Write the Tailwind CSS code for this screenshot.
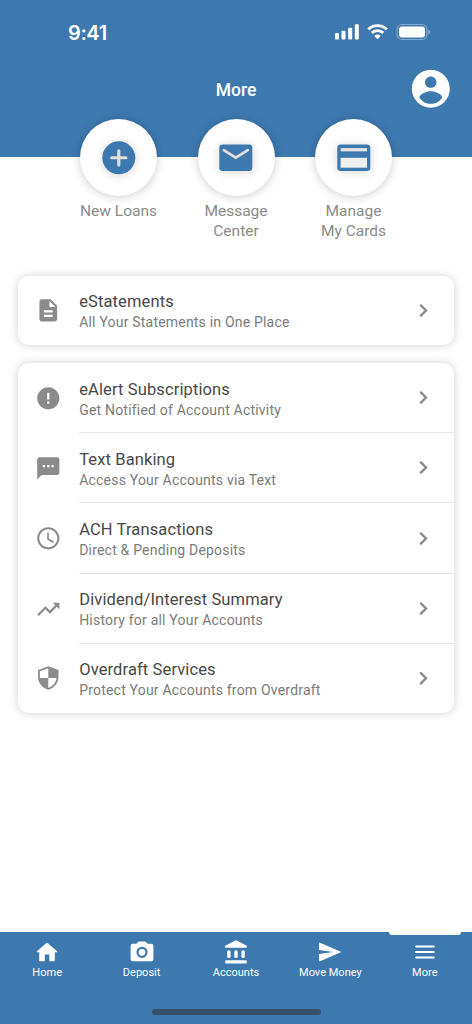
<!DOCTYPE html>
<html lang="en">
<head>
<meta charset="utf-8">
<title>More</title>
<script src="https://cdn.jsdelivr.net/npm/@tailwindcss/browser@4"></script>
</head>
<body class="bg-white font-['Roboto',sans-serif]">
<div class="w-[472px] h-[1024px] flex flex-col overflow-hidden bg-white">
  <header class="h-[157px] shrink-0 bg-[#3d78af] text-white flex flex-col">
    <div class="h-[64px] flex items-center justify-between pl-[68px] pr-[41px]">
      <span class="font-['Inter',sans-serif] font-semibold text-[20px] leading-6 tracking-[-0.4px] pt-px">9:41</span>
      <svg class="w-[96px] h-[18px]" viewBox="0 0 96 18" fill="#fff">
        <rect x="0" y="10" width="4" height="6.5" rx="1"/><rect x="6.5" y="7.7" width="4" height="8.8" rx="1"/><rect x="13.2" y="4.7" width="4" height="11.8" rx="1"/><rect x="19.8" y="1.2" width="4" height="15.3" rx="1"/>
        <g fill="none" stroke="#fff" stroke-width="2.9"><path d="M33.3 6.4a13.2 13.2 0 0 1 18.4 0"/><path d="M36.8 9.9a8.2 8.2 0 0 1 11.4 0"/></g>
        <path d="M42.5 16.3l-3.2-3.3a4.7 4.7 0 0 1 6.4 0z"/>
        <rect x="62.1" y="1.6" width="29.8" height="14.8" rx="4.6" fill="none" stroke="#fff" stroke-opacity=".42"/>
        <rect x="64" y="3.5" width="26" height="11" rx="3"/><path d="M93.5 6.5v5a2.8 2.8 0 0 0 0-5z" fill-opacity=".5"/>
      </svg>
    </div>
    <div class="h-[50.4px] grid grid-cols-3 items-center px-[18px]">
      <h1 class="col-start-2 text-center font-medium text-[17.5px] leading-6 tracking-[0px] pt-[1.4px]">More</h1>
      <svg class="justify-self-end w-[45.6px] h-[45.6px]" viewBox="0 0 24 24" fill="#fff"><path d="M12 2C6.48 2 2 6.48 2 12s4.480 10 10 10 10-4.480 10-10S17.520 2 12 2zm0 3.500c1.660 0 3 1.340 3 3s-1.340 3-3 3-3-1.340-3-3 1.340-3 3-3zm0 14.400c-2.500 0-4.710-1.280-6-3.220.03-1.990 4-3.380 6-3.380s5.970 1.390 6 3.380c-1.290 1.940-3.500 3.220-6 3.220z"/></svg>
    </div>
  </header>

  <nav class="-mt-[38px] h-[156.7px] shrink-0 grid grid-cols-[repeat(3,117.5px)] justify-center text-[#8b8b8b] text-[15.5px] leading-[20px] tracking-[0px] text-center">
    <div class="flex flex-col items-center gap-[5px]">
      <div class="size-[77px] rounded-full bg-white shadow-[0_1px_10px_rgba(0,0,0,0.2)] flex items-center justify-center"><svg class="size-[39.6px] drop-shadow-[0_1px_5px_rgba(0,0,0,0.16)]" viewBox="0 0 24 24"><circle cx="12" cy="12" r="10" fill="#3d78af"/><path d="M12 7.700v8.600M7.700 12h8.600" stroke="#e0e0e0" stroke-width="1.900" stroke-linecap="round"/></svg></div>
      <span>New Loans</span>
    </div>
    <div class="flex flex-col items-center gap-[5px]">
      <div class="size-[77px] rounded-full bg-white shadow-[0_1px_10px_rgba(0,0,0,0.2)] flex items-center justify-center"><svg class="size-[39.6px] drop-shadow-[0_1px_5px_rgba(0,0,0,0.16)]" viewBox="0 0 24 24"><rect x="2" y="4" width="20" height="16" rx="2" fill="#3d78af"/><path d="M4.700 7.400L12 11.900l7.300-4.500" fill="none" stroke="#e0e0e0" stroke-width="1.600" stroke-linecap="round"/></svg></div>
      <span>Message<br>Center</span>
    </div>
    <div class="flex flex-col items-center gap-[5px]">
      <div class="size-[77px] rounded-full bg-white shadow-[0_1px_10px_rgba(0,0,0,0.2)] flex items-center justify-center"><svg class="size-[39.6px] drop-shadow-[0_1px_5px_rgba(0,0,0,0.16)]" viewBox="0 0 24 24"><rect x="2" y="4" width="20" height="16" rx="2" fill="#3d78af"/><path fill="#e3e3e3" d="M4 6.100h16v2H4z"/><path fill="#efefef" d="M4 12h16v6H4z"/></svg></div>
      <span>Manage<br>My Cards</span>
    </div>
  </nav>

  <main class="flex-1 min-h-0 px-[18px] flex flex-col gap-[17.3px] text-[#8b8b8b]">
    <section class="h-[69.7px] shrink-0 rounded-[11px] bg-white shadow-[0_0_9px_rgba(0,0,0,0.19)]">
      <a class="h-[69.7px] flex items-center pl-[17px]">
        <svg class="size-[26.600px] shrink-0 mr-[17.6px]" viewBox="0 0 24 24" fill="currentColor"><path fill-rule="evenodd" d="M14 2H6c-1.100 0-2 .9-2 2v16c0 1.100.9 2 2 2h12c1.100 0 2-.9 2-2V8l-6-6zm2 16H8v-2h8v2zm0-4H8v-2h8v2zm-3-5V3.500L18.500 9H13z"/></svg>
        <span class="flex-1 flex flex-col pt-[2px]"><b class="font-normal text-[16.5px] leading-[21px] tracking-[0.12px] text-[#484848]">eStatements</b><span class="text-[14px] leading-5 tracking-[0.2px] text-[#7b7b7b]">All Your Statements in One Place</span></span>
        <svg class="size-[25px] mr-[17.6px]" viewBox="0 0 24 24" fill="none" stroke="currentColor" stroke-width="2.300" stroke-linecap="round"><path d="M9.500 7.100l4.900 4.900-4.900 4.900"/></svg>
      </a>
    </section>
    <section class="h-[350.5px] shrink-0 rounded-[11px] bg-white shadow-[0_0_9px_rgba(0,0,0,0.19)]">
      <a class="h-[70.35px] flex items-center pl-[17px]">
        <svg class="size-[26.600px] shrink-0 mr-[17.6px]" viewBox="0 0 24 24" fill="currentColor"><path d="M12 2C6.480 2 2 6.480 2 12s4.480 10 10 10 10-4.480 10-10S17.520 2 12 2zm1 15h-2v-2h2v2zm0-4h-2V7h2v6z"/></svg>
        <span class="flex-1 h-[70.35px] border-b border-[#e8e8e8] flex items-center"><span class="flex-1 flex flex-col pt-[4px]"><b class="font-normal text-[16.5px] leading-[21px] tracking-[0.12px] text-[#484848]">eAlert Subscriptions</b><span class="text-[14px] leading-5 tracking-[0.2px] text-[#7b7b7b]">Get Notified of Account Activity</span></span>
        <svg class="size-[25px] mr-[17.6px]" viewBox="0 0 24 24" fill="none" stroke="currentColor" stroke-width="2.300" stroke-linecap="round"><path d="M9.500 7.100l4.900 4.900-4.900 4.900"/></svg></span>
      </a>
      <a class="h-[70.35px] flex items-center pl-[17px]">
        <svg class="size-[26.600px] shrink-0 mr-[17.6px]" viewBox="0 0 24 24" fill="currentColor"><path d="M20 2H4c-1.100 0-2 .9-2 2v18l4-4h14c1.100 0 2-.9 2-2V4c0-1.100-.9-2-2-2zM9 11H7V9h2v2zm4 0h-2V9h2v2zm4 0h-2V9h2v2z"/></svg>
        <span class="flex-1 h-[70.35px] border-b border-[#e8e8e8] flex items-center"><span class="flex-1 flex flex-col pt-[4px]"><b class="font-normal text-[16.5px] leading-[21px] tracking-[0.12px] text-[#484848]">Text Banking</b><span class="text-[14px] leading-5 tracking-[0.2px] text-[#7b7b7b]">Access Your Accounts via Text</span></span>
        <svg class="size-[25px] mr-[17.6px]" viewBox="0 0 24 24" fill="none" stroke="currentColor" stroke-width="2.300" stroke-linecap="round"><path d="M9.500 7.100l4.900 4.900-4.900 4.900"/></svg></span>
      </a>
      <a class="h-[70.35px] flex items-center pl-[17px]">
        <svg class="size-[26.600px] shrink-0 mr-[17.6px]" viewBox="0 0 24 24" fill="currentColor"><path d="M11.990 2C6.470 2 2 6.480 2 12s4.470 10 9.990 10C17.520 22 22 17.520 22 12S17.520 2 11.990 2zM12 20.100c-4.470 0-8.100-3.630-8.100-8.100s3.630-8.100 8.100-8.100 8.100 3.630 8.100 8.100-3.630 8.100-8.100 8.100zm.5-13.100H11v6l5.250 3.150.75-1.230-4.500-2.670z"/></svg>
        <span class="flex-1 h-[70.35px] border-b border-[#e8e8e8] flex items-center"><span class="flex-1 flex flex-col pt-[3px]"><b class="font-normal text-[16.5px] leading-[21px] tracking-[0.12px] text-[#484848]">ACH Transactions</b><span class="text-[14px] leading-5 tracking-[0.2px] text-[#7b7b7b]">Direct &amp; Pending Deposits</span></span>
        <svg class="size-[25px] mr-[17.6px]" viewBox="0 0 24 24" fill="none" stroke="currentColor" stroke-width="2.300" stroke-linecap="round"><path d="M9.500 7.100l4.900 4.900-4.900 4.900"/></svg></span>
      </a>
      <a class="h-[70.35px] flex items-center pl-[17px]">
        <svg class="size-[26.600px] shrink-0 mr-[17.6px]" viewBox="0 0 24 24" fill="currentColor"><path d="M16 6l2.290 2.290-4.880 4.880-4-4L2 16.590 3.410 18l6-6 4 4 6.300-6.290L22 12V6z"/></svg>
        <span class="flex-1 h-[70.35px] border-b border-[#e8e8e8] flex items-center"><span class="flex-1 flex flex-col pt-[2px]"><b class="font-normal text-[16.5px] leading-[21px] tracking-[0.12px] text-[#484848]">Dividend/Interest Summary</b><span class="text-[14px] leading-5 tracking-[0.2px] text-[#7b7b7b]">History for all Your Accounts</span></span>
        <svg class="size-[25px] mr-[17.6px]" viewBox="0 0 24 24" fill="none" stroke="currentColor" stroke-width="2.300" stroke-linecap="round"><path d="M9.500 7.100l4.900 4.900-4.900 4.900"/></svg></span>
      </a>
      <a class="h-[69.1px] flex items-center pl-[17px]">
        <svg class="size-[26.600px] shrink-0 mr-[17.6px]" viewBox="0 0 24 24" fill="currentColor"><path fill-rule="evenodd" d="M12 1.100L21.200 4.500V10.800c0 5.300-3.900 9.900-9.200 11.600C6.700 20.700 2.800 16.100 2.800 10.800V4.500zM12 2.900L4.400 5.700V11.800H12zM12 11.800v9c3.800-1.300 6.900-4.800 7.500-9z"/></svg>
        <span class="flex-1 h-[69.1px] flex items-center"><span class="flex-1 flex flex-col pt-[1px]"><b class="font-normal text-[16.5px] leading-[21px] tracking-[0.12px] text-[#484848]">Overdraft Services</b><span class="text-[14px] leading-5 tracking-[0.2px] text-[#7b7b7b]">Protect Your Accounts from Overdraft</span></span>
        <svg class="size-[25px] mr-[17.6px]" viewBox="0 0 24 24" fill="none" stroke="currentColor" stroke-width="2.300" stroke-linecap="round"><path d="M9.500 6.800l4.900 4.900-4.900 4.900"/></svg></span>
      </a>
    </section>
  </main>

  <footer class="relative h-[92.500px] shrink-0 bg-[#3d78af] text-white flex flex-col">
    <span class="absolute right-[11px] top-0 w-[72px] h-[3px] rounded-b-[3px] bg-white"></span>
    <nav class="h-[77px] grid grid-cols-5 text-[11px] leading-4 text-center tracking-[0.02px] pt-[7px]">
      <a class="flex flex-col items-center gap-[0.6px]"><svg class="size-[26px]" viewBox="0 0 26 26" fill="#fff"><path d="M10.800 22.200v-6.700h4.500v6.700h4.900q.6 0 .6-.6v-8.400h2q1-.2.2-1l-9.400-8.300q-.6-.5-1.200 0L3 12.200q-.8.8.2 1h2v8.400q0 .6.6.6z"/></svg><span>Home</span></a>
      <a class="flex flex-col items-center gap-[0.6px]"><svg class="size-[26px]" viewBox="0 0 26 26" fill="#fff"><path fill-rule="evenodd" d="M9.500 2.400h7l2.100 2.300h3.600a2.200 2.200 0 0 1 2.200 2.200v13.200a2.200 2.200 0 0 1-2.200 2.200H3.800a2.200 2.200 0 0 1-2.200-2.200V6.900a2.200 2.200 0 0 1 2.200-2.200h3.600zM13 7.700a5.600 5.600 0 1 0 0 11.200 5.600 5.600 0 0 0 0-11.200z"/><circle cx="13" cy="13.300" r="3.400"/></svg><span>Deposit</span></a>
      <a class="flex flex-col items-center gap-[0.6px]"><svg class="size-[26px]" viewBox="0 0 26 26" fill="#fff"><path d="M12.300 1.600q.7-.4 1.400 0l9.600 4.800q.7.400.7 1v.6q0 .7-.6.700H2.600Q2 8.700 2 8v-.6q0-.6.7-1z"/><rect x="4.200" y="11.300" width="3.400" height="7.800" rx="1.600"/><rect x="11.300" y="11.300" width="3.400" height="7.800" rx="1.600"/><rect x="18.400" y="11.300" width="3.400" height="7.800" rx="1.600"/><rect x="2" y="21.200" width="22" height="3.200" rx="1.500"/></svg><span>Accounts</span></a>
      <a class="flex flex-col items-center gap-[0.6px]"><svg class="size-[26px]" viewBox="0 0 26 26" fill="#fff"><path d="M2 4.400q0-1.100 1-.7L23.300 12.500q.9.500 0 1L3 22.300q-1 .3-1-.7v-6.500L15.500 13 2 10.900z"/></svg><span>Move Money</span></a>
      <a class="flex flex-col items-center gap-[0.6px]"><svg class="size-[26px]" viewBox="0 0 26 26" stroke="#fff" stroke-width="2.200" stroke-linecap="round"><path d="M4.100 7.500h17.600M4.100 13h17.600M4.100 18.500h17.600"/></svg><span>More</span></a>
    </nav>
    <div class="self-center w-[169px] h-[6px] rounded-full bg-[#374f68]"></div>
  </footer>
</div>
</body>
</html>
